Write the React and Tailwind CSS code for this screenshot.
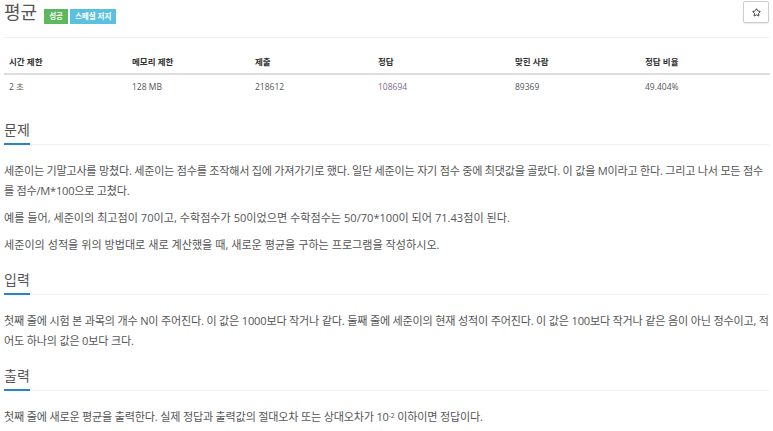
import React from "react";
import { Star } from "lucide-react";

const font = { fontFamily: '"Open Sans", "Noto Sans CJK KR", sans-serif' };

function Heading({ children }) {
  return (
    <div className="flex border-b border-[#f0f0f0]">
      <span className="-mb-px border-b-2 border-[#2684cc] pb-[3px] text-[14px] leading-[20px] text-[#555]">
        {children}
      </span>
    </div>
  );
}

export default function App() {
  const cols = [
    { h: "시간 제한", v: "2 초", w: "w-[123px]" },
    { h: "메모리 제한", v: "128 MB", w: "w-[123px]" },
    { h: "제출", v: "218612", w: "w-[123px]" },
    { h: "정답", v: "108694", w: "w-[137px]", link: true },
    { h: "맞힌 사람", v: "89369", w: "w-[130px]" },
    { h: "정답 비율", v: "49.404%", w: "flex-1" },
  ];
  return (
    <div style={font} className="w-[773px] h-[431px] overflow-hidden bg-white px-1 text-[#555]">
      <div className="flex h-6 items-center justify-between">
        <div className="flex h-6 items-center">
          <span className="text-[18px] leading-6 text-[#555]">평균</span>
          <span className="ml-[7px] mt-[9px] flex h-[15px] items-center bg-[#5cb85c] px-[5px] text-[7.5px] font-bold text-white">성공</span>
          <span className="ml-[2px] mt-[9px] flex h-[15px] items-center bg-[#5bc0de] px-[5px] text-[7.5px] font-bold text-white">스페셜 저지</span>
        </div>
        <button className="flex h-[22px] w-[26px] items-center justify-center rounded-[2px] border border-[#ccc] bg-white shadow-[0_1px_1px_rgba(0,0,0,0.08)]">
          <Star size={9} strokeWidth={2.6} color="#333" />
        </button>
      </div>
      <div className="mt-[13px] border-t border-[#eee]" />
      <div className="mt-[12px] w-[766px]">
        <div className="flex border-b-2 border-[#ddd]">
          {cols.map((c) => (
            <div key={c.h} className={`${c.w} px-[5px] pt-[6px] pb-[5px] text-[8.5px] font-bold leading-[12px] text-[#333]`}>
              {c.h}
            </div>
          ))}
        </div>
        <div className="flex">
          {cols.map((c) => (
            <div
              key={c.h}
              className={`${c.w} px-[5px] py-[6px] text-[8.5px] leading-[12px] ${c.link ? "text-[#7a6b92]" : "text-[#555]"}`}
            >
              {c.v}
            </div>
          ))}
        </div>
      </div>

      <div className="mt-[21px]">
        <Heading>문제</Heading>
        <div className="mt-4 flex flex-col gap-[7px] text-[11.1px] leading-[20px]">
          <p className="tracking-[-0.24px]">
            세준이는 기말고사를 망쳤다. 세준이는 점수를 조작해서 집에 가져가기로 했다. 일단 세준이는 자기 점수 중에 최댓값을 골랐다. 이 값을 M이라고 한다. 그리고 나서 모든 점수를 점수/M*100으로 고쳤다.
          </p>
          <p>예를 들어, 세준이의 최고점이 70이고, 수학점수가 50이었으면 수학점수는 50/70*100이 되어 71.43점이 된다.</p>
          <p>세준이의 성적을 위의 방법대로 새로 계산했을 때, 새로운 평균을 구하는 프로그램을 작성하시오.</p>
        </div>
      </div>

      <div className="mt-[15px]">
        <Heading>입력</Heading>
        <div className="mt-4 text-[11.1px] leading-[20px]">
          <p className="tracking-[-0.2px]">
            첫째 줄에 시험 본 과목의 개수 N이 주어진다. 이 값은 1000보다 작거나 같다. 둘째 줄에 세준이의 현재 성적이 주어진다. 이 값은 100보다 작거나 같은 음이 아닌 정수이고, 적어도 하나의 값은 0보다 크다.
          </p>
        </div>
      </div>

      <div className="mt-[15px]">
        <Heading>출력</Heading>
        <div className="mt-4 text-[11.1px] leading-[20px]">
          <p className="tracking-[-0.2px]">
            첫째 줄에 새로운 평균을 출력한다. 실제 정답과 출력값의 절대오차 또는 상대오차가 10<sup className="text-[7px]">-2</sup> 이하이면 정답이다.
          </p>
        </div>
      </div>
    </div>
  );
}
